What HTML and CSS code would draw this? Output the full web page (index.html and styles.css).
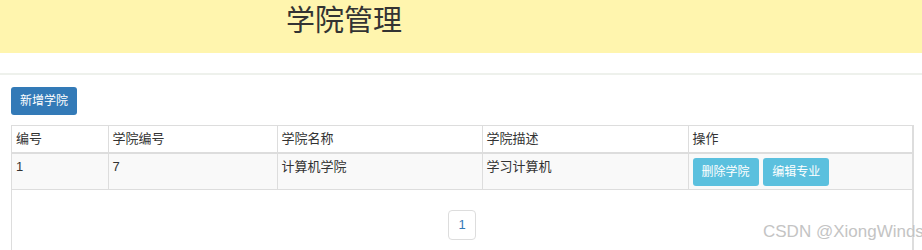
FILE: index.html
```html
<!DOCTYPE html>
<html>

<head>
    <meta charset="utf-8">
    <title>学院管理</title>
    <link rel="stylesheet" href="styles.css">
</head>

<body>
    <div class="top">
        <h1>学院管理</h1>
    </div>
    <div class="line"></div>
    <div class="main">
        <button class="btn btn-primary">新增学院</button>
        <div class="panel">
            <table class="list">
                <colgroup>
                    <col style="width:96px">
                    <col style="width:169px">
                    <col style="width:205px">
                    <col style="width:206px">
                    <col>
                </colgroup>
                <tr>
                    <th>编号</th>
                    <th>学院编号</th>
                    <th>学院名称</th>
                    <th>学院描述</th>
                    <th>操作</th>
                </tr>
                <tr class="odd">
                    <td>1</td>
                    <td>7</td>
                    <td>计算机学院</td>
                    <td>学习计算机</td>
                    <td>
                        <button class="btn btn-info">删除学院</button>
                        <button class="btn btn-info">编辑专业</button>
                    </td>
                </tr>
            </table>
            <div class="pager">
                <a href="#">1</a>
            </div>
        </div>
    </div>
    <div class="mark">CSDN @XiongWinds</div>
</body>

</html>
```

FILE: styles.css
```css
body {
    margin: 0;
    font-family: "Liberation Sans", "Noto Sans CJK SC", sans-serif;
    font-size: 13px;
    color: #333;
    background-color: white;
    overflow: hidden;
}

.top {
    background-color: #fff5ae;
    height: 53px;
    padding-left: 286px;
}

.top h1 {
    margin: 0;
    font-weight: normal;
    font-size: 29px;
    line-height: 42px;
    color: #333;
}

.line {
    margin-top: 20px;
    height: 2px;
    background-color: #eef1ec;
}

.main {
    padding: 12px 8px 0 11px;
}

.btn {
    border: 0;
    border-radius: 3px;
    color: #fff;
    font-family: inherit;
    font-size: 12px;
    line-height: 18px;
    padding: 5px 9px;
    cursor: pointer;
}

.btn-primary {
    background-color: #337ab7;
    height: 28px;
    width: 66px;
}

.btn-info {
    background-color: #5bc0de;
    height: 28px;
    width: 66px;
    margin-right: 1px;
}

.panel {
    margin-top: 10px;
    border: 1px solid #ddd;
    border-right-width: 2px;
    height: 200px;
}

.list {
    width: 100%;
    border-collapse: collapse;
    table-layout: fixed;
}

.list th,
.list td {
    text-align: left;
    font-weight: normal;
    vertical-align: top;
    padding: 4px 4px 4px 4px;
    line-height: 18px;
    border: 1px solid #ddd;
    border-top: 0;
}

.list th {
    border-bottom-width: 2px;
}

.list tr th:first-child,
.list tr td:first-child {
    border-left: 0;
}

.list tr th:last-child,
.list tr td:last-child {
    border-right: 0;
}

.list .odd td {
    background-color: #f9f9f9;
    padding-bottom: 3px;
}

.pager {
    text-align: center;
    padding-top: 20px;
}

.pager a {
    display: inline-block;
    width: 26px;
    height: 28px;
    line-height: 28px;
    border: 1px solid #ddd;
    border-radius: 4px;
    color: #337ab7;
    text-decoration: none;
    font-size: 13px;
}

.mark {
    position: absolute;
    left: 763px;
    top: 222px;
    font-size: 17px;
    color: #c4c4c4;
    text-shadow: 0 0 1px #fff;
    white-space: nowrap;
}
```
